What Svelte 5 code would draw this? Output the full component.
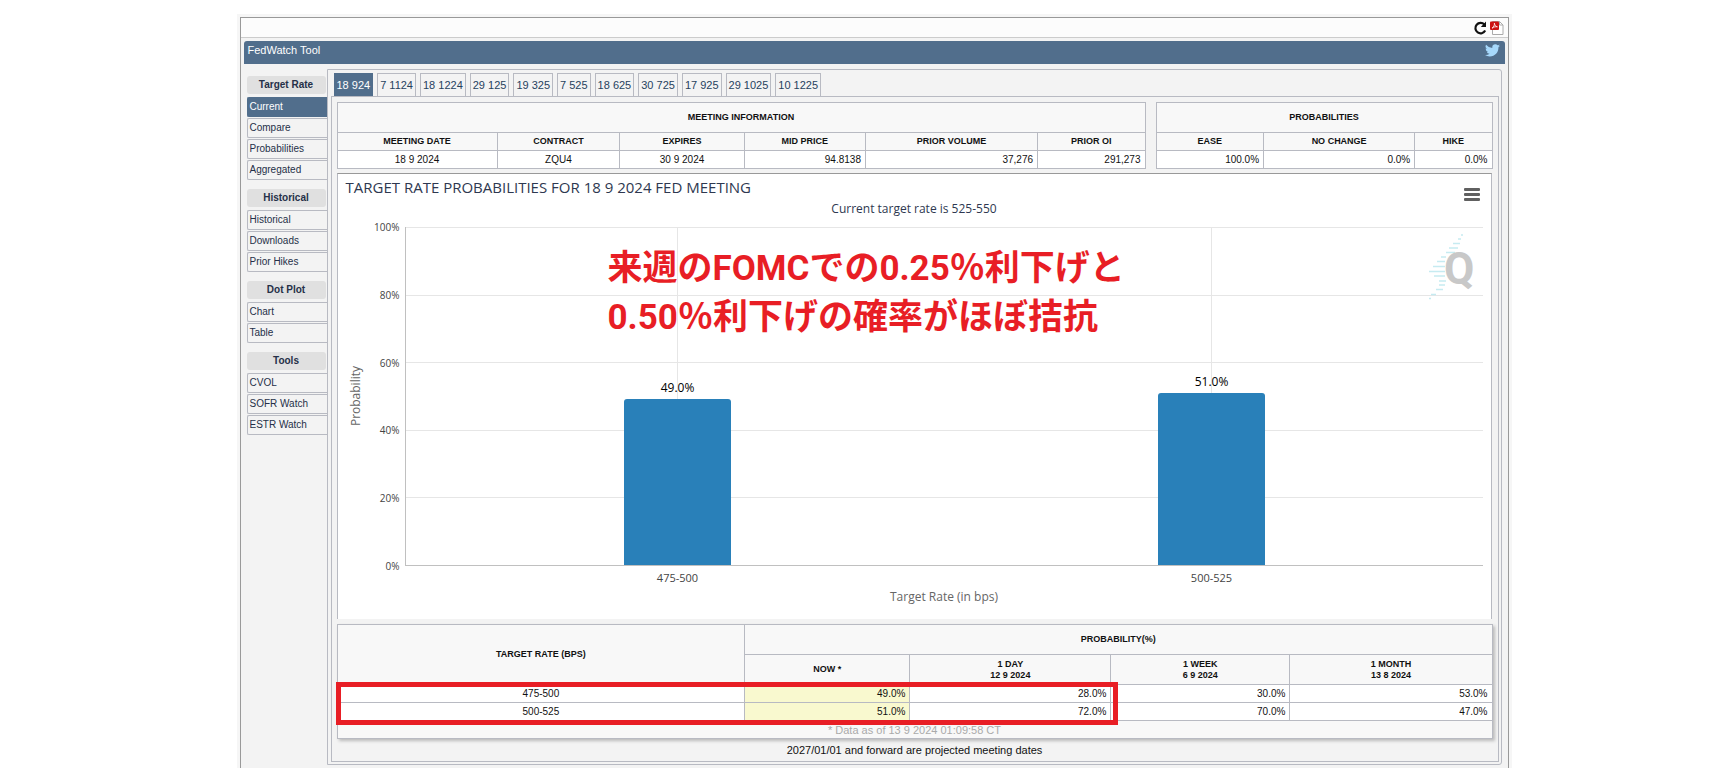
<script lang="ts">
  const tabs = ['18 924', '7 1124', '18 1224', '29 125', '19 325', '7 525', '18 625', '30 725', '17 925', '29 1025', '10 1225'];

  const menu = [
    { title: 'Target Rate', items: ['Current', 'Compare', 'Probabilities', 'Aggregated'] },
    { title: 'Historical', items: ['Historical', 'Downloads', 'Prior Hikes'] },
    { title: 'Dot Plot', items: ['Chart', 'Table'] },
    { title: 'Tools', items: ['CVOL', 'SOFR Watch', 'ESTR Watch'] }
  ];

  const ticks = ['100%', '80%', '60%', '40%', '20%', '0%'];

  const bars = [
    { rate: '475-500', value: 49 },
    { rate: '500-525', value: 51 }
  ];

  const rows = [
    { rate: '475-500', now: '49.0%', day: '28.0%', week: '30.0%', month: '53.0%' },
    { rate: '500-525', now: '51.0%', day: '72.0%', week: '70.0%', month: '47.0%' }
  ];

  let activeTab = $state('18 924');
</script>

<div class="page">
  <div class="frame">
    <div class="window">
      <div class="toolbar">
        <button aria-label="Reload">
          <svg width="14" height="16" viewBox="0 0 14 16">
            <path d="M11.4 4.6A5.2 5.2 0 1 0 12.2 10.6" fill="none" stroke="#111" stroke-width="2.2" />
            <path d="M13 1.5v5.4H7.8z" fill="#111" />
          </svg>
        </button>
        <button aria-label="Save as PDF">
          <svg width="14" height="16" viewBox="0 0 14 16">
            <path d="M2.5 1.5h7l3.5 3.5v9.5H2.5z" fill="#fff" stroke="#aaa" />
            <path d="M9.5 1.5v3.5H13" fill="none" stroke="#aaa" />
            <rect x="0" y="1.5" width="9" height="8.5" rx="1" fill="#c11" />
            <path d="M2 8.2C4 7 4.5 5 4.4 3.2c.3 2 1.3 3.2 3 3.6C5.5 6.5 3.5 7 2 8.2z" fill="none" stroke="#fff" stroke-width=".8" />
          </svg>
        </button>
      </div>

      <header class="title-bar">
        <h1>FedWatch Tool</h1>
        <a href="#twitter" aria-label="Twitter">
          <svg width="15" height="13" viewBox="0 0 24 20">
            <path d="M24 2.4a9.8 9.8 0 0 1-2.8.8A4.9 4.9 0 0 0 23.3.4a9.9 9.9 0 0 1-3.1 1.2 4.9 4.9 0 0 0-8.4 4.5A14 14 0 0 1 1.7.9a4.9 4.9 0 0 0 1.5 6.6A4.9 4.9 0 0 1 1 6.9a4.9 4.9 0 0 0 3.9 4.9 5 5 0 0 1-2.2.1 4.9 4.9 0 0 0 4.6 3.4A9.9 9.9 0 0 1 0 17.3a13.9 13.9 0 0 0 7.5 2.2c9.1 0 14.3-7.7 14-14.6A10 10 0 0 0 24 2.4z" fill="#a6d8fb" />
          </svg>
        </a>
      </header>

      <div class="body">
        <nav class="sidebar">
          {#each menu as group}
            <h2>{group.title}</h2>
            <ul>
              {#each group.items as item}
                <li><a href="#{item}" class:current={item === 'Current'}>{item}</a></li>
              {/each}
            </ul>
          {/each}
        </nav>

        <main class="panel">
          <div class="tabs">
            {#each tabs as tab}
              <button class:active={tab === activeTab} onclick={() => (activeTab = tab)}>{tab}</button>
            {/each}
          </div>

          <div class="content">
            <div class="summary">
              <table>
                <colgroup><col /><col class="c-contract" /><col class="c-expires" /><col class="c-price" /><col class="c-volume" /><col class="c-oi" /></colgroup>
                <thead>
                  <tr class="group"><th colspan="6">MEETING INFORMATION</th></tr>
                  <tr><th>MEETING DATE</th><th>CONTRACT</th><th>EXPIRES</th><th>MID PRICE</th><th>PRIOR VOLUME</th><th>PRIOR OI</th></tr>
                </thead>
                <tbody>
                  <tr><td class="center">18 9 2024</td><td class="center">ZQU4</td><td class="center">30 9 2024</td><td>94.8138</td><td>37,276</td><td>291,273</td></tr>
                </tbody>
              </table>
              <table>
                <colgroup><col /><col class="c-none" /><col class="c-hike" /></colgroup>
                <thead>
                  <tr class="group"><th colspan="3">PROBABILITIES</th></tr>
                  <tr><th>EASE</th><th>NO CHANGE</th><th>HIKE</th></tr>
                </thead>
                <tbody>
                  <tr><td>100.0%</td><td>0.0%</td><td>0.0%</td></tr>
                </tbody>
              </table>
            </div>

            <section class="chart">
              <div class="chart-head">
                <h3>TARGET RATE PROBABILITIES FOR 18 9 2024 FED MEETING</h3>
                <button aria-label="Chart menu"><span></span><span></span><span></span></button>
              </div>
              <p class="subtitle">Current target rate is 525-550</p>
              <div class="chart-body">
                <div class="y-title"><span>Probability</span></div>
                <div class="y-labels">
                  {#each ticks as tick}<span>{tick}</span>{/each}
                </div>
                <div class="plot">
                  <div class="grid">
                    {#each ticks.slice(1) as tick}<div></div>{/each}
                  </div>
                  <svg class="watermark" width="56" height="76" viewBox="0 0 56 76">
                    <path d="M40 8h2M37 12h3M32 16.5h7M28 21h9M25 25.5h9M20 30h5M16 34.5h8M12 39.5h12M8 44.5h16M13 49h11M18 54h7M18 58h6M15 62.5h7M10 67.5h5M8 71.5h2" stroke="#c6ebf1" stroke-width="1.5" />
                    <text x="23" y="57">Q</text>
                  </svg>
                  <div class="bars">
                    {#each bars as bar}
                      <div class="slot">
                        <span>{bar.value.toFixed(1)}%</span>
                        <div class="bar" style="height: {bar.value}%"></div>
                      </div>
                    {/each}
                  </div>
                  <p class="note">来週のFOMCでの0.25％利下げと<br />0.50％利下げの確率がほぼ拮抗</p>
                </div>
              </div>
              <div class="x-labels">
                {#each bars as bar}<span>{bar.rate}</span>{/each}
              </div>
              <p class="x-title">Target Rate (in bps)</p>
            </section>

            <div class="history">
              <table>
                <colgroup><col /><col class="c-now" /><col class="c-day" /><col class="c-week" /><col class="c-month" /></colgroup>
                <thead>
                  <tr class="group"><th rowspan="2">TARGET RATE (BPS)</th><th colspan="4">PROBABILITY(%)</th></tr>
                  <tr class="dates"><th>NOW *</th><th>1 DAY<br />12 9 2024</th><th>1 WEEK<br />6 9 2024</th><th>1 MONTH<br />13 8 2024</th></tr>
                </thead>
                <tbody>
                  {#each rows as row}
                    <tr><td class="center">{row.rate}</td><td class="now">{row.now}</td><td>{row.day}</td><td>{row.week}</td><td>{row.month}</td></tr>
                  {/each}
                </tbody>
                <tfoot>
                  <tr><td colspan="5">* Data as of 13 9 2024 01:09:58 CT</td></tr>
                </tfoot>
              </table>
              <div class="highlight"></div>
            </div>

            <p class="footnote">2027/01/01 and forward are projected meeting dates</p>
          </div>
        </main>
      </div>
    </div>
  </div>
</div>

<style>
  :global(body) {
    margin: 0;
    background: #fff;
  }

  .page {
    box-sizing: border-box;
    display: flex;
    justify-content: center;
    min-height: 100vh;
    padding: 14px 0 0 13px;
    font-family: "Liberation Sans", Arial, sans-serif;
    font-size: 10px;
    line-height: 12px;
    color: #111;
  }

  h1, h2, h3, p, ul {
    margin: 0;
    padding: 0;
    font-weight: normal;
  }

  ul {
    list-style: none;
  }

  a {
    color: inherit;
    text-decoration: none;
  }

  button {
    margin: 0;
    padding: 0;
    border: 0;
    background: none;
    font: inherit;
    cursor: pointer;
  }

  svg {
    display: block;
  }

  .frame {
    box-sizing: border-box;
    display: flex;
    width: 100%;
    max-width: 1275px;
    padding: 3px 3px 0;
    background: #f6f6f6;
  }

  .window {
    flex: 1;
    min-width: 0;
    border: 1px solid #999;
    border-bottom: 0;
    background: #f3f3f3;
  }

  .toolbar {
    display: flex;
    justify-content: flex-end;
    align-items: center;
    gap: 3px;
    height: 19px;
    padding-right: 4px;
    border-bottom: 1px solid #ccc;
    background: #fcfcfc;
  }

  .title-bar {
    display: flex;
    justify-content: space-between;
    height: 20px;
    margin: 3px;
    padding: 3px 5px 0 4px;
    border-radius: 3px 3px 0 0;
    background: #516e8c;
    color: #fff;
  }

  .title-bar h1 {
    font-size: 11px;
  }

  .body {
    display: flex;
    padding: 2px 6px 3px;
  }

  .sidebar {
    flex: none;
    width: 80px;
    padding-top: 7px;
    color: #253048;
  }

  .sidebar h2 {
    width: 79px;
    padding: 3px 0;
    border-radius: 3px;
    background: #e0e0e0;
    font-size: 10px;
    font-weight: bold;
    text-align: center;
  }

  .sidebar ul {
    display: flex;
    flex-direction: column;
    gap: 1px;
    padding: 3px 0 9px;
  }

  .sidebar li a {
    display: block;
    padding: 3px 2px;
    border: 1px solid #b8bac2;
    border-right: 0;
    border-radius: 2px 0 0 2px;
  }

  .sidebar a.current {
    border-color: #516e8c;
    background: #516e8c;
    color: #fff;
  }

  .panel {
    flex: 1;
    min-width: 0;
    padding: 3px 2px 2px 3px;
    border: 1px solid #b8bac2;
    border-radius: 0 3px 3px 0;
  }

  .tabs {
    display: flex;
    gap: 4px;
    padding-left: 3px;
  }

  .tabs button {
    height: 23px;
    padding: 0 2px;
    border: 1px solid #b8bac2;
    border-bottom: 0;
    color: #27425e;
    font-size: 11px;
  }

  .tabs button.active {
    border-color: #516e8c;
    background: #516e8c;
    color: #fff;
  }

  .content {
    padding: 5px;
    border: 1px solid #b8bac2;
  }

  .summary {
    display: grid;
    grid-template-columns: 809fr 337fr;
    gap: 10px;
  }

  table {
    width: 100%;
    table-layout: fixed;
    border-collapse: collapse;
    background: #fff;
  }

  tr {
    height: 18px;
  }

  th, td {
    box-sizing: border-box;
    padding: 0 4px;
    border: 1px solid #b8bac2;
    text-align: right;
  }

  th {
    background: #f8f8f8;
    font-size: 9px;
    line-height: 11px;
    text-align: center;
  }

  tr.group {
    height: 30px;
  }

  td.center {
    text-align: center;
  }

  .c-contract { width: 15.2%; }
  .c-expires { width: 15.4%; }
  .c-price { width: 15%; }
  .c-volume { width: 21.3%; }
  .c-oi { width: 13.3%; }
  .c-none { width: 45%; }
  .c-hike { width: 23%; }
  .c-now { width: 14.3%; }
  .c-day { width: 17.4%; }
  .c-week { width: 15.5%; }
  .c-month { width: 17.5%; }

  .chart {
    margin-top: 4px;
    margin-right: 1px;
    padding: 4px 8px 15px;
    border: 1px solid #b8bac2;
    border-top-color: #999;
    border-bottom: 0;
    background: #fff;
    font-family: "Open Sans", "Noto Sans", sans-serif;
    color: #444;
  }

  .chart-head {
    display: flex;
    justify-content: space-between;
    align-items: flex-start;
    height: 20px;
  }

  .chart-head h3 {
    font-size: 15px;
    line-height: 18px;
    color: #2e3850;
  }

  .chart-head button {
    display: flex;
    flex-direction: column;
    gap: 2px;
    width: 16px;
    margin: 10px 3px 0 0;
  }

  .chart-head button span {
    flex: none;
    height: 3px;
    border-radius: 1px;
    background: #606060;
  }

  .subtitle {
    padding-top: 3px;
    font-size: 12px;
    line-height: 15px;
    text-align: center;
    color: #2e3850;
  }

  .chart-body {
    display: flex;
    height: 339px;
    margin-top: 11px;
  }

  .y-title {
    display: flex;
    align-items: center;
    justify-content: center;
    width: 20px;
    font-size: 12px;
    color: #666;
  }

  .y-title span {
    writing-mode: vertical-rl;
    transform: rotate(180deg);
  }

  .y-labels {
    display: flex;
    flex-direction: column;
    justify-content: space-between;
    width: 34px;
    margin: -6px 5px -6px 0;
    text-align: right;
  }

  .plot {
    position: relative;
    flex: 1;
    border-left: 1px solid #c0c0c0;
    border-bottom: 1px solid #c0c0c0;
  }

  .grid {
    display: flex;
    flex-direction: column;
    height: 100%;
  }

  .grid div {
    flex: 1;
    border-top: 1px solid #e6e6e6;
  }

  .bars {
    position: absolute;
    inset: 0 4px 0 5px;
    display: flex;
  }

  .slot {
    flex: 1;
    display: flex;
    flex-direction: column;
    align-items: center;
    justify-content: flex-end;
    background: linear-gradient(#e6e6e6, #e6e6e6) center / 1px 100% no-repeat;
    font-size: 12px;
    line-height: 16px;
    color: #000;
  }

  .slot span {
    padding-bottom: 3px;
  }

  .bar {
    width: 20%;
    border-radius: 3px 3px 0 0;
    background: #2980b9;
  }

  .watermark {
    position: absolute;
    top: 0;
    right: 6px;
  }

  .watermark text {
    font-family: Roboto, sans-serif;
    font-size: 44px;
    font-weight: bold;
    fill: #c8c8c8;
  }

  .note {
    position: absolute;
    top: 17px;
    left: 202px;
    font-family: Roboto, "Noto Sans CJK JP", sans-serif;
    font-size: 35px;
    font-weight: bold;
    line-height: 49px;
    white-space: nowrap;
    color: #e81e25;
  }

  .x-labels {
    display: flex;
    padding: 6px 4px 0 65px;
    font-size: 11px;
  }

  .x-labels span {
    flex: 1;
    text-align: center;
  }

  .x-title {
    padding: 6px 0 0 60px;
    font-size: 12px;
    line-height: 14px;
    text-align: center;
    color: #666;
  }

  .history {
    position: relative;
    margin-top: 5px;
    box-shadow: 2px 2px 3px #bbb;
  }

  .history tr.dates {
    height: 30px;
  }

  .history td.now {
    background: #f9f9cf;
  }

  .history tfoot td {
    background: #f8f8f8;
    color: #aaa;
    font-size: 11px;
    text-align: center;
  }

  .highlight {
    position: absolute;
    top: 58px;
    left: -1px;
    box-sizing: border-box;
    width: calc(68% - 4px);
    height: 43px;
    border: 5px solid #e81e25;
  }

  .footnote {
    padding-top: 5px;
    font-size: 11px;
    text-align: center;
  }
</style>
